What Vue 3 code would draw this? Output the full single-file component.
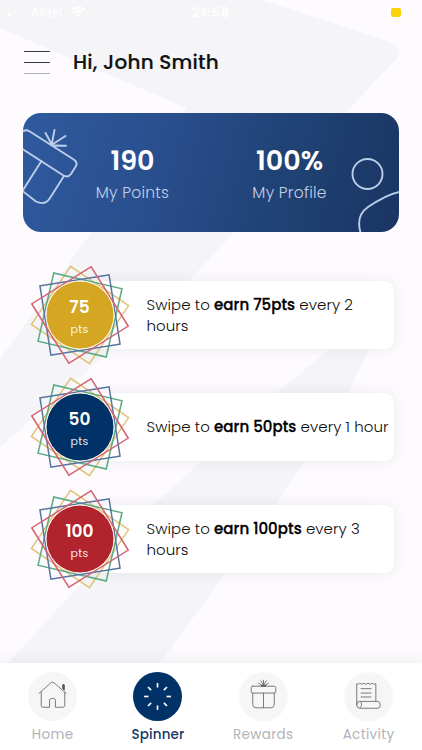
<script setup>
const offers = [
  { points: 75, tone: 'gold', period: 'every 2 hours' },
  { points: 50, tone: 'navy', period: 'every 1 hour' },
  { points: 100, tone: 'red', period: 'every 3 hours' }
]
const tabs = [
  { name: 'Home', icon: 'home' },
  { name: 'Spinner', icon: 'spinner', active: true },
  { name: 'Rewards', icon: 'gift' },
  { name: 'Activity', icon: 'receipt' }
]
const rays = [0, 45, 90, 135, 180, 225, 270, 315]
</script>

<template>
  <div class="screen">
    <svg class="backdrop" viewBox="0 0 422 750" aria-hidden="true">
      <path d="M0 0H262L393 43Q396 44 397 47L399 52Q400 55 397 58L350 108L188 282L0 447V359L90 234L187 108L0 28Z" />
      <path d="M330 349L276 393L153 505L8 663H160L226 573L276 505L304 461L348 393L369 349L385 310Z" />
    </svg>

    <div class="status">
      <span class="signal"></span>
      <span class="carrier">Airtel</span>
      <svg class="wifi" viewBox="0 0 16 12"><path d="M1 4.3Q8-1.7 15 4.3M3.5 7Q8 3.2 12.5 7" fill="none" stroke="#fff" stroke-width="2" /><path d="M5.8 9.2Q8 7.2 10.2 9.2L8 11.5Z" fill="#fff" /></svg>
      <span class="clock">21:58</span>
      <span class="battery"></span>
    </div>

    <header class="top">
      <div class="menu"><i></i><i></i><i></i></div>
      <h1>Hi, John Smith</h1>
    </header>

    <section class="summary">
      <svg class="art" viewBox="0 0 376 119" aria-hidden="true">
        <g fill="none" stroke="#bccdea" stroke-width="1.9" stroke-linecap="round" stroke-linejoin="round">
          <path d="M-2 19L2 17.5Q4 16.7 6 18L50 46Q55 49 53 53L48 61Q45 65 40.500 62.500L-3 34.500M18.500 48L0 77M41 63L27 85Q22 93 13 88.500L-3 76M28.500 31L22.500 20M29 30L31.500 17M30 31L42.500 23M31 32.500L43 32.700" />
          <circle cx="344.500" cy="61" r="15" />
          <path d="M378 78.500Q364 81 345 94Q332 103 338 121" />
        </g>
      </svg>
      <div class="stat"><b>190</b><span>My Points</span></div>
      <div class="stat"><b>100%</b><span>My Profile</span></div>
    </section>

    <main class="offers">
      <article v-for="o in offers" :key="o.points" class="offer">
        <div class="badge">
          <svg viewBox="-50 -50 100 100" aria-hidden="true">
            <g fill="none" stroke-width="1.5">
              <rect x="-35" y="-35" width="70" height="70" transform="rotate(34)" stroke="#e2c37c" />
              <rect x="-35" y="-35" width="70" height="70" transform="rotate(13)" stroke="#5bab82" />
              <rect x="-35" y="-35" width="70" height="70" transform="rotate(-9)" stroke="#5a75a2" />
              <rect x="-35" y="-35" width="70" height="70" transform="rotate(-32)" stroke="#d5606f" />
            </g>
            <circle r="34" :class="o.tone" stroke="#fff6e6" stroke-width="1" />
          </svg>
          <div class="value"><b>{{ o.points }}</b><small>pts</small></div>
        </div>
        <p>Swipe to <strong>earn {{ o.points }}pts</strong> {{ o.period }}</p>
      </article>
    </main>

    <nav class="tabs">
      <div v-for="t in tabs" :key="t.name" class="tab" :class="{ active: t.active }">
        <div class="disc">
          <svg viewBox="0 0 50 50" aria-hidden="true">
            <g v-if="t.icon === 'home'" fill="none" stroke="#777" stroke-width="1">
              <path d="M11 22L23.500 11Q25 9.500 26.500 11L39 22M13.500 20V34Q13.500 36 15.500 36H22V29Q22 27 24 27H26Q28 27 28 29V36H35.500Q37.500 36 37.500 34V20" />
              <path d="M35.500 13H37V18.500L35.500 17Z" fill="#555" stroke="#555" />
            </g>
            <g v-else-if="t.icon === 'spinner'" stroke="#fff" stroke-width="1.700">
              <path v-for="r in rays" :key="r" d="M25 11.300V15.800" :transform="`rotate(${r} 25 25)`" />
            </g>
            <g v-else-if="t.icon === 'gift'" fill="none" stroke="#777" stroke-width="1" stroke-linecap="round">
              <rect x="12.500" y="14.500" width="25" height="7" rx="1.500" />
              <path d="M14 21.500V33Q14 36.500 17.500 36.500H32.500Q36 36.500 36 33V21.500M25 21.500V36.500M25 14L22.500 9M25 14V8.500M25 14L27.800 9M24 14L20 11.500M26 14L30 11.500" />
              <path d="M23 14H27" stroke="#555" stroke-width="1.500" />
            </g>
            <g v-else fill="none" stroke="#777" stroke-width="1" stroke-linejoin="round">
              <path d="M13 31V12Q15 13 16 11.500Q18 13.500 20 11.500Q22.500 13.500 24.500 11.500Q27 13.500 29 11.500Q30 13 32.500 12V30M17 17H28M17 21.500H28M17 25.500H28" />
              <path d="M16 30H34.500Q37 30 37 33.500Q37 37 34.500 37H16Q13 37 13 33.500Q13 30 16 30ZM16 30Q18.500 31 18 34L16 37M13 30V34" />
            </g>
          </svg>
        </div>
        <span>{{ t.name }}</span>
      </div>
    </nav>
  </div>
</template>

<style>
body { background: #fdfbfd; }
</style>

<style scoped>
.screen {
  position: relative;
  width: 422px;
  height: 750px;
  overflow: hidden;
  display: flex;
  flex-direction: column;
  background: #fdfbfd;
  font-family: Poppins, Inter, "Open Sans", sans-serif;
  color: #111;
}
.backdrop { position: absolute; inset: 0; width: 422px; height: 750px; }
.backdrop path { fill: #f5f5f8; }
.status, .top, .summary, .offers, .tabs { position: relative; }
.status {
  height: 24px;
  box-sizing: border-box;
  display: flex;
  align-items: center;
  color: #fff;
  font-size: 12px;
  padding: 0 21px 0 8px;
  font-family: Inter, sans-serif;
}
.signal { width: 3px; height: 4px; margin: 6px 20px 0 0; background: #fff; border-radius: 1px; }
.carrier { width: 33px; letter-spacing: .3px; }
.wifi { width: 16px; height: 12px; margin-left: 6px; }
.clock { margin-left: 106px; font-weight: 600; font-size: 12.500px; letter-spacing: 1px; }
.battery { width: 10px; height: 9px; margin-left: auto; border-radius: 2px; background: #fbd20c; }
.top { height: 89px; display: flex; padding-left: 24px; }
.menu { width: 26px; padding-top: 27px; display: flex; flex-direction: column; gap: 10px; }
.menu i { height: 1px; background: #3c3c3e; }
.menu i:nth-child(3) { background: #b2b2b5; }
h1 { margin: 24px 0 0 23px; font-size: 20px; line-height: 28px; font-weight: 500; letter-spacing: .22px; white-space: nowrap; -webkit-text-stroke: .2px #111; }
.summary {
  width: 376px;
  height: 119px;
  margin-left: 23px;
  box-sizing: border-box;
  padding: 0 31px;
  border-radius: 18px;
  overflow: hidden;
  display: grid;
  grid-template-columns: 157px 157px;
  background: linear-gradient(105deg, #2f5a9f 0%, #294f8e 35%, #204376 66%, #1a3563 100%);
}
.art { position: absolute; inset: 0; width: 376px; height: 119px; }
.stat { position: relative; padding-top: 32px; display: flex; flex-direction: column; align-items: center; color: #fff; }
.stat b { font-size: 27px; line-height: 32px; font-weight: 600; }
.stat span { font-size: 15.500px; line-height: 24px; margin-top: 4px; font-weight: 300; color: #c2cfe8; letter-spacing: .25px; }
.offers { padding: 49px 28px 0 33px; display: flex; flex-direction: column; gap: 44px; }
.offer {
  height: 68px;
  display: flex;
  align-items: center;
  border-radius: 9px;
  background: linear-gradient(90deg, transparent 45px, #fff 45px);
  position: relative;
}
.offer::before {
  content: "";
  position: absolute;
  inset: 0 0 0 46px;
  border-radius: 9px;
  box-shadow: 0 0 14px rgba(80, 75, 105, .1);
}
.badge { position: relative; width: 100px; height: 100px; margin-left: -3.500px; flex: none; }
.badge svg { width: 100px; height: 100px; display: block; }
.gold { fill: #d5a621; }
.navy { fill: #003267; }
.red { fill: #b1232d; }
.value { position: absolute; inset: 0; display: flex; flex-direction: column; align-items: center; color: #fff; padding-top: 30px; }
.value b { font-size: 17px; line-height: 24px; font-weight: 600; }
.value small { font-size: 11px; line-height: 16px; margin-top: 2px; opacity: .9; letter-spacing: .3px; }
.offer p { position: relative; flex: 1; margin: 0 0 0 17px; font-size: 15px; line-height: 21.500px; font-weight: 300; color: #0c0c0c; letter-spacing: .07px; }
.offer strong { font-weight: 500; color: #000; letter-spacing: .06px; -webkit-text-stroke: .3px #000; }
.tabs {
  margin-top: auto;
  height: 87px;
  display: grid;
  grid-template-columns: repeat(4, 105.300px);
  box-sizing: border-box;
  background: #fff;
  box-shadow: 0 -3px 16px rgba(80, 75, 105, .07);
}
.tab { padding-top: 9px; display: flex; flex-direction: column; align-items: center; }
.disc { width: 49px; height: 49px; border-radius: 50%; background: #f6f6f6; }
.disc svg { display: block; width: 49px; height: 49px; }
.tab span { margin-top: 4px; font-size: 13.500px; line-height: 20px; color: #b0b3b8; letter-spacing: .35px; }
.tab.active .disc { background: #003267; }
.tab.active span { color: #163764; font-weight: 500; letter-spacing: .15px; }
</style>
